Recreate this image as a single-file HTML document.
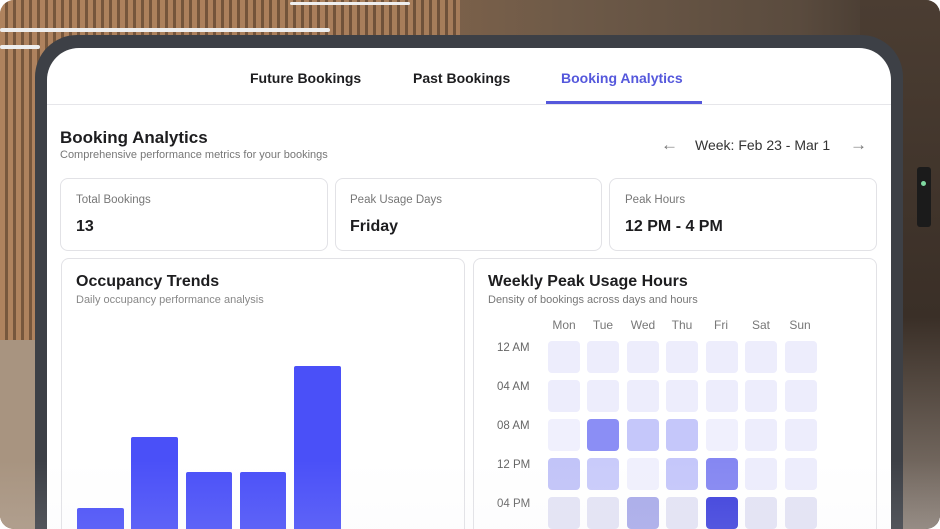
<!DOCTYPE html>
<html><head><style>
*{margin:0;padding:0;box-sizing:border-box}
html,body{width:940px;height:529px;overflow:hidden}
body{background:#fff;font-family:"Liberation Sans",Arial,sans-serif}
.wrap{position:absolute;left:0;top:0;width:940px;height:529px;border-radius:14px;overflow:hidden;
background:linear-gradient(90deg,#a07a58 0%,#8e6a4c 30%,#6e5a48 60%,#5a4b3e 85%,#3b3129 100%)}
.slats{position:absolute;left:0;top:0;width:460px;height:529px;background:repeating-linear-gradient(90deg,#b48660 0 5px,#6a4c34 5px 8px);opacity:.75}
.bgr{position:absolute;left:860px;top:0;width:80px;height:529px;background:linear-gradient(180deg,#4b3d32,#3a2f27 60%,#8a7f76 100%)}
.bgl{position:absolute;left:0;top:340px;width:40px;height:189px;background:#a89480}
.light{position:absolute;height:4px;background:#eee;border-radius:2px}
.frame{position:absolute;left:35px;top:35px;width:868px;height:494px;background:#3d4046;border-radius:42px 42px 0 0}
.screen{position:absolute;left:47px;top:48px;width:844px;height:481px;background:#fff;border-radius:32px 32px 0 0;overflow:hidden}
.abs{position:absolute}
.tab{position:absolute;top:69px;font-size:14px;font-weight:bold;color:#1d1d1f}
.card{position:absolute;border:1.5px solid #e2e2e6;border-radius:8px;background:#fff}
.big{border-bottom:none;border-radius:8px 8px 0 0}
.lbl{position:absolute;font-size:11.5px;color:#777}
.val{position:absolute;font-size:16px;font-weight:bold;color:#1d1d1f}
.bar{position:absolute;background:#4a50f8;border-radius:2px 2px 0 0}
.cell{position:absolute;width:32px;height:32px;border-radius:4px;background:#ededfc}
.dh{position:absolute;top:318px;font-size:12px;color:#777;width:40px;text-align:center}
.rh{position:absolute;left:497px;font-size:11.5px;color:#666}
.fade{position:absolute;left:0;top:460px;width:940px;height:69px;background:linear-gradient(180deg,rgba(255,255,255,0),rgba(235,235,240,.12))}
</style></head><body>
<div class="wrap">
<div class="slats"></div>
<div class="bgr"></div>
<div class="bgl"></div>
<div class="light" style="left:0;top:28px;width:330px"></div>
<div class="light" style="left:0;top:45px;width:40px"></div>
<div class="light" style="left:290px;top:2px;width:120px;height:3px"></div>
<div class="abs" style="left:917px;top:167px;width:14px;height:60px;background:#1b1b1b;border-radius:3px"></div>
<div class="abs" style="left:921px;top:181px;width:5px;height:5px;background:#7fd9a0;border-radius:50%"></div>
<div class="frame"></div>
<div class="screen"></div>

<div class="tab" style="left:250px;top:70px">Future Bookings</div>
<div class="tab" style="left:413px;top:70px">Past Bookings</div>
<div class="tab" style="left:561px;top:70px;color:#5558dc">Booking Analytics</div>
<div class="abs" style="left:47px;top:104px;width:844px;height:1px;background:#e6e6ea"></div>
<div class="abs" style="left:546px;top:101px;width:156px;height:3px;background:#5558dc"></div>

<div class="abs" style="left:60px;top:128px;font-size:17px;font-weight:bold;color:#1d1d1f">Booking Analytics</div>
<div class="abs" style="left:60px;top:149px;font-size:11px;color:#777">Comprehensive performance metrics for your bookings</div>
<div class="abs" style="left:661px;top:135px;font-size:17px;color:#777">←</div>
<div class="abs" style="left:695px;top:137px;font-size:14px;color:#333">Week: Feb 23 - Mar 1</div>
<div class="abs" style="left:850px;top:135px;font-size:17px;color:#777">→</div>

<div class="card" style="left:60px;top:178px;width:268px;height:73px"></div>
<div class="card" style="left:335px;top:178px;width:267px;height:73px"></div>
<div class="card" style="left:609px;top:178px;width:268px;height:73px"></div>
<div class="lbl" style="left:76px;top:194px">Total Bookings</div>
<div class="val" style="left:76px;top:218px">13</div>
<div class="lbl" style="left:350px;top:194px">Peak Usage Days</div>
<div class="val" style="left:350px;top:218px">Friday</div>
<div class="lbl" style="left:625px;top:194px">Peak Hours</div>
<div class="val" style="left:625px;top:218px">12 PM - 4 PM</div>

<div class="card big" style="left:61px;top:258px;width:404px;height:271px"></div>
<div class="card big" style="left:473px;top:258px;width:404px;height:271px"></div>
<div class="abs" style="left:76px;top:273px;font-size:16px;font-weight:bold;color:#1d1d1f">Occupancy Trends</div>
<div class="abs" style="left:76px;top:294px;font-size:11px;color:#888">Daily occupancy performance analysis</div>
<div class="bar" style="left:77px;top:508px;width:47px;height:21px"></div>
<div class="bar" style="left:131px;top:437px;width:47px;height:92px"></div>
<div class="bar" style="left:186px;top:472px;width:46px;height:57px"></div>
<div class="bar" style="left:240px;top:472px;width:46px;height:57px"></div>
<div class="bar" style="left:294px;top:366px;width:47px;height:163px"></div>

<div class="abs" style="left:488px;top:273px;font-size:16px;font-weight:bold;color:#1d1d1f">Weekly Peak Usage Hours</div>
<div class="abs" style="left:488px;top:294px;font-size:11px;color:#777">Density of bookings across days and hours</div>
<div class="dh" style="left:544px">Mon</div><div class="dh" style="left:583px">Tue</div><div class="dh" style="left:623px">Wed</div><div class="dh" style="left:662px">Thu</div><div class="dh" style="left:701px">Fri</div><div class="dh" style="left:741px">Sat</div><div class="dh" style="left:780px">Sun</div>
<div class="rh" style="top:342px">12 AM</div><div class="rh" style="top:381px">04 AM</div><div class="rh" style="top:420px">08 AM</div><div class="rh" style="top:459px">12 PM</div><div class="rh" style="top:498px">04 PM</div>

<div class="cell" style="left:548px;top:341px"></div><div class="cell" style="left:587px;top:341px"></div><div class="cell" style="left:627px;top:341px"></div><div class="cell" style="left:666px;top:341px"></div><div class="cell" style="left:706px;top:341px"></div><div class="cell" style="left:745px;top:341px"></div><div class="cell" style="left:785px;top:341px"></div>
<div class="cell" style="left:548px;top:380px"></div><div class="cell" style="left:587px;top:380px"></div><div class="cell" style="left:627px;top:380px"></div><div class="cell" style="left:666px;top:380px"></div><div class="cell" style="left:706px;top:380px"></div><div class="cell" style="left:745px;top:380px"></div><div class="cell" style="left:785px;top:380px"></div>
<div class="cell" style="left:548px;top:419px;background:#f0f0fd"></div><div class="cell" style="left:587px;top:419px;background:#8b8ef5"></div><div class="cell" style="left:627px;top:419px;background:#c5c7fa"></div><div class="cell" style="left:666px;top:419px;background:#c5c7fa"></div><div class="cell" style="left:706px;top:419px;background:#f0f0fd"></div><div class="cell" style="left:745px;top:419px"></div><div class="cell" style="left:785px;top:419px"></div>
<div class="cell" style="left:548px;top:458px;background:#c2c4f8"></div><div class="cell" style="left:587px;top:458px;background:#c9cbfa"></div><div class="cell" style="left:627px;top:458px;background:#f0f0fd"></div><div class="cell" style="left:666px;top:458px;background:#c5c7fa"></div><div class="cell" style="left:706px;top:458px;background:#8587f2"></div><div class="cell" style="left:745px;top:458px"></div><div class="cell" style="left:785px;top:458px"></div>
<div class="cell" style="left:548px;top:497px;background:#e3e3f5"></div><div class="cell" style="left:587px;top:497px;background:#e3e3f5"></div><div class="cell" style="left:627px;top:497px;background:#a9abea"></div><div class="cell" style="left:666px;top:497px;background:#e3e3f5"></div><div class="cell" style="left:706px;top:497px;background:#3f42dd"></div><div class="cell" style="left:745px;top:497px;background:#e3e3f5"></div><div class="cell" style="left:785px;top:497px;background:#e3e3f5"></div>
<div class="fade"></div>
</div>
</body></html>
